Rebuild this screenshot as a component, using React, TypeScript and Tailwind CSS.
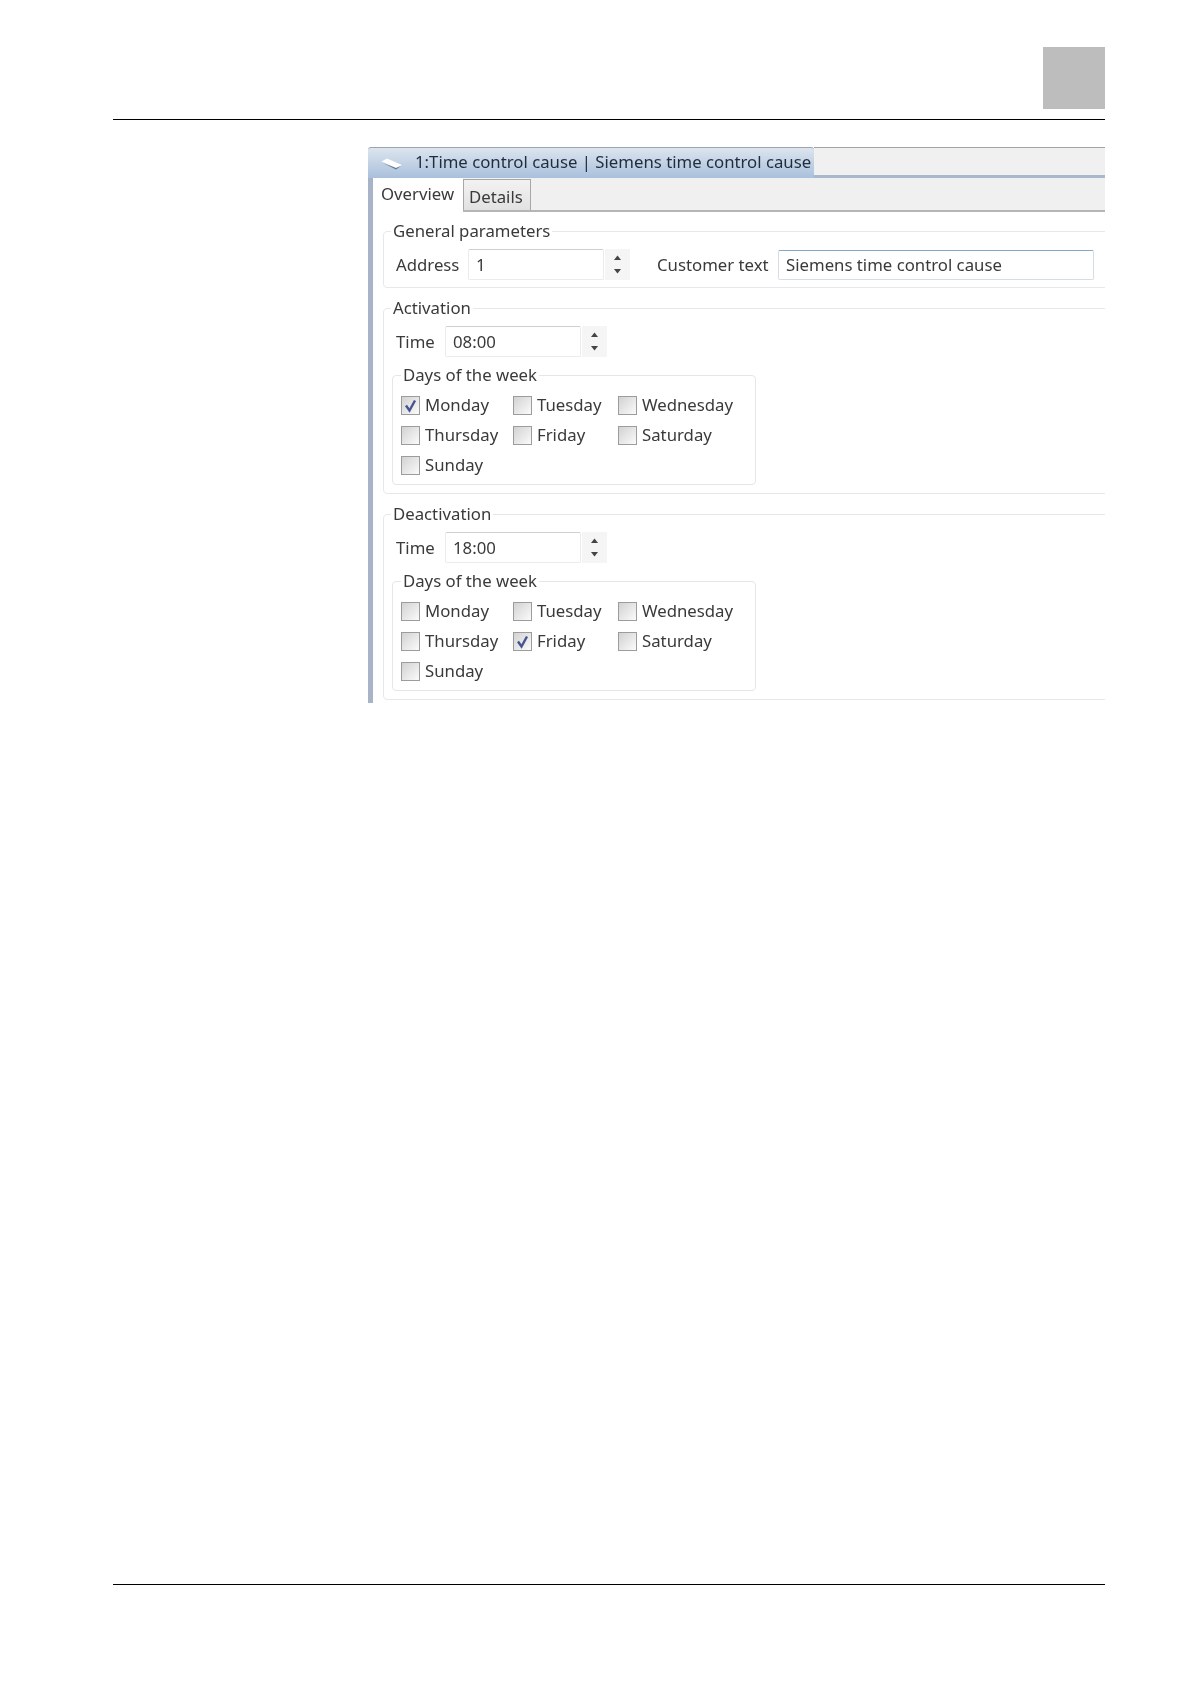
const FONT = "font-['Noto_Sans','Open_Sans',sans-serif]";

function Spinner() {
  return (
    <div className="w-[25px] h-[31px] ml-px bg-[#f5f5f5] flex flex-col items-center justify-between py-[6px]">
      <svg width="9" height="7" viewBox="0 0 9 7"><path d="M4.5 0.5 L8 5 H1 Z" fill="#444" /></svg>
      <svg width="9" height="7" viewBox="0 0 9 7"><path d="M4.5 6.5 L8 2 H1 Z" fill="#444" /></svg>
    </div>
  );
}

function NumberField({ value }: { value: string }) {
  return (
    <div className="flex">
      <div className="w-[136px] h-[31px] bg-white border border-[#ebebeb] border-t-[#cfcfcf] rounded-[2px] pl-[7px] flex items-center text-[#3a3a3a]">
        {value}
      </div>
      <Spinner />
    </div>
  );
}

function Box({ label, checked }: { label: string; checked?: boolean }) {
  return (
    <div className="h-[30px] flex items-center">
      <div className="w-[19px] h-[19px] border border-[#9c9c9c] bg-gradient-to-br from-[#d2d2d2] to-[#fbfbfb] p-px flex items-center justify-center">
        {checked && (
          <svg width="15" height="15" viewBox="0 0 15 15">
            <path d="M3 7.5 L6.5 12.5 L12 2.5" fill="none" stroke="#46548f" strokeWidth="2.4" />
          </svg>
        )}
      </div>
      <span className="ml-[5px]">{label}</span>
    </div>
  );
}

function Days({ checked }: { checked: string }) {
  const rows = ["Monday", "Tuesday", "Wednesday", "Thursday", "Friday", "Saturday", "Sunday"];
  return (
    <fieldset className="ml-[8px] mt-[6px] w-[364px] border border-[#e6e6e6] rounded-[4px] pl-[8px] pb-[4px]">
      <legend className="px-[2px] h-[24px] leading-[24px]">Days of the week</legend>
      <div className="grid grid-cols-[112px_105px_1fr] pt-[3px]">
        {rows.map((d) => (
          <Box key={d} label={d} checked={d === checked} />
        ))}
      </div>
    </fieldset>
  );
}

function Schedule({ title, time, checked }: { title: string; time: string; checked: string }) {
  return (
    <fieldset className="mt-[8px] w-[780px] border border-[#e8e8e8] rounded-[4px] pb-[8px]">
      <legend className="ml-[7px] px-[2px] h-[24px] leading-[24px]">{title}</legend>
      <div className="flex items-center mt-[6px] pl-[12px]">
        <span className="w-[49px]">Time</span>
        <NumberField value={time} />
      </div>
      <Days checked={checked} />
    </fieldset>
  );
}

export default function App() {
  return (
    <div className={`w-[1190px] h-[1684px] bg-white flex flex-col pl-[113px] pr-[85px] pt-[47px] ${FONT} text-[16.75px] text-[#3a3a3a]`}>
      <div className="flex justify-end">
        <div className="w-[62px] h-[62px] bg-[#bdbdbd]" />
      </div>
      <div className="h-px bg-black mt-[10px]" />
      <div className="ml-[255px] mt-[27px] w-[737px] h-[556px] overflow-hidden flex flex-col blur-[0.4px]">
        <div className="flex h-[31px] shrink-0">
          <div className="w-[446px] rounded-t-[3px] border-t border-[#9aa5b2] bg-gradient-to-b from-[#dde5ee] to-[#a9c0dc] flex items-center pl-[13px] text-[#1f2d3d]">
            <svg width="22" height="12" viewBox="0 0 22 12" className="mt-[1px]">
              <path d="M0.5 3.5 L6 0.5 L21 7 L15 10 Z" fill="#ffffff" />
              <path d="M2 5 L15 10 L20 8 L15 11.5 Z" fill="#66788f" />
            </svg>
            <span className="ml-[12px] -mt-[2px] whitespace-nowrap">1:Time control cause | Siemens time control cause</span>
          </div>
          <div className="flex-1 flex flex-col">
            <div className="flex-1 bg-[#f0f0f0] border-t border-[#a3a3a3]" />
            <div className="h-[3px] bg-[#a9b9cc]" />
          </div>
        </div>
        <div className="flex-1 border-l-[5px] border-[#a9b3c8] flex flex-col min-h-0">
          <div className="h-[34px] shrink-0 bg-[#f0f0f0] border-b-2 border-[#b5b5b5] flex items-end">
            <div className="w-[90px] h-[34px] -mb-[2px] bg-white pl-[8px] pt-[2px] leading-[28px]">Overview</div>
            <div className="w-[68px] h-[31px] border border-b-0 border-[#a8a8a8] bg-gradient-to-b from-[#f2f2f2] to-[#e2e2e2] pl-[5px] pt-[1px] leading-[31px]">Details</div>
          </div>
          <div className="pl-[10px] pt-[7px]">
            <fieldset className="w-[780px] border border-[#e8e8e8] rounded-[4px] pb-[7px]">
              <legend className="ml-[7px] px-[2px] h-[24px] leading-[24px]">General parameters</legend>
              <div className="flex items-center mt-[6px] pl-[12px]">
                <span className="w-[72px]">Address</span>
                <NumberField value="1" />
                <span className="ml-[27px] w-[121px]">Customer text</span>
                <div className="w-[316px] h-[30px] bg-white border border-[#d5dde5] border-t-[#7fa8c9] rounded-[2px] pl-[7px] flex items-center">
                  Siemens time control cause
                </div>
              </div>
            </fieldset>
            <Schedule title="Activation" time="08:00" checked="Monday" />
            <Schedule title="Deactivation" time="18:00" checked="Friday" />
          </div>
        </div>
      </div>
      <div className="h-px bg-black mt-auto mb-[99px]" />
    </div>
  );
}
